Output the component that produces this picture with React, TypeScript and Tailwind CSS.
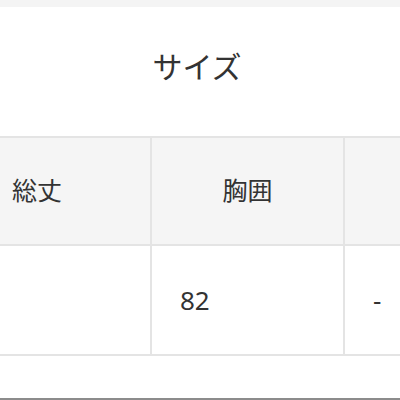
export default function App() {
  var font = { fontFamily: '"Noto Sans", "Noto Sans CJK JP", sans-serif' };
  return (
    <div className="w-[400px] h-[400px] bg-white overflow-hidden flex flex-col text-[#333]" style={font}>
      {/* top strip */}
      <div className="h-[7px] bg-[#f4f4f4] shrink-0"></div>

      {/* title */}
      <div className="h-[129px] shrink-0 flex items-center justify-center pr-[6px] pb-[10px]">
        <h2 className="text-[30px] leading-none font-normal">サイズ</h2>
      </div>

      {/* size table */}
      <div className="border-t-2 border-[#e4e4e4] shrink-0">
        <div className="flex h-[108px] bg-[#f5f5f5] border-b-2 border-[#e4e4e4]">
          <div className="w-[152px] shrink-0 flex items-center pl-[12px] text-[25px] border-r-2 border-[#e4e4e4]">総丈</div>
          <div className="w-[193px] shrink-0 flex items-center justify-center text-[25px] border-r-2 border-[#e4e4e4]">胸囲</div>
          <div className="flex-1"></div>
        </div>
        <div className="flex h-[110px] bg-white border-b-2 border-[#e4e4e4]">
          <div className="w-[152px] shrink-0 border-r-2 border-[#e4e4e4]"></div>
          <div className="w-[193px] shrink-0 flex items-center pl-[28px] text-[26px] border-r-2 border-[#e4e4e4]">82</div>
          <div className="flex-1 flex items-center pl-[28px] text-[26px]">-</div>
        </div>
      </div>

      <div className="flex-1"></div>
      <div className="h-[2px] bg-[#8c8c8c] shrink-0"></div>
    </div>
  );
}
